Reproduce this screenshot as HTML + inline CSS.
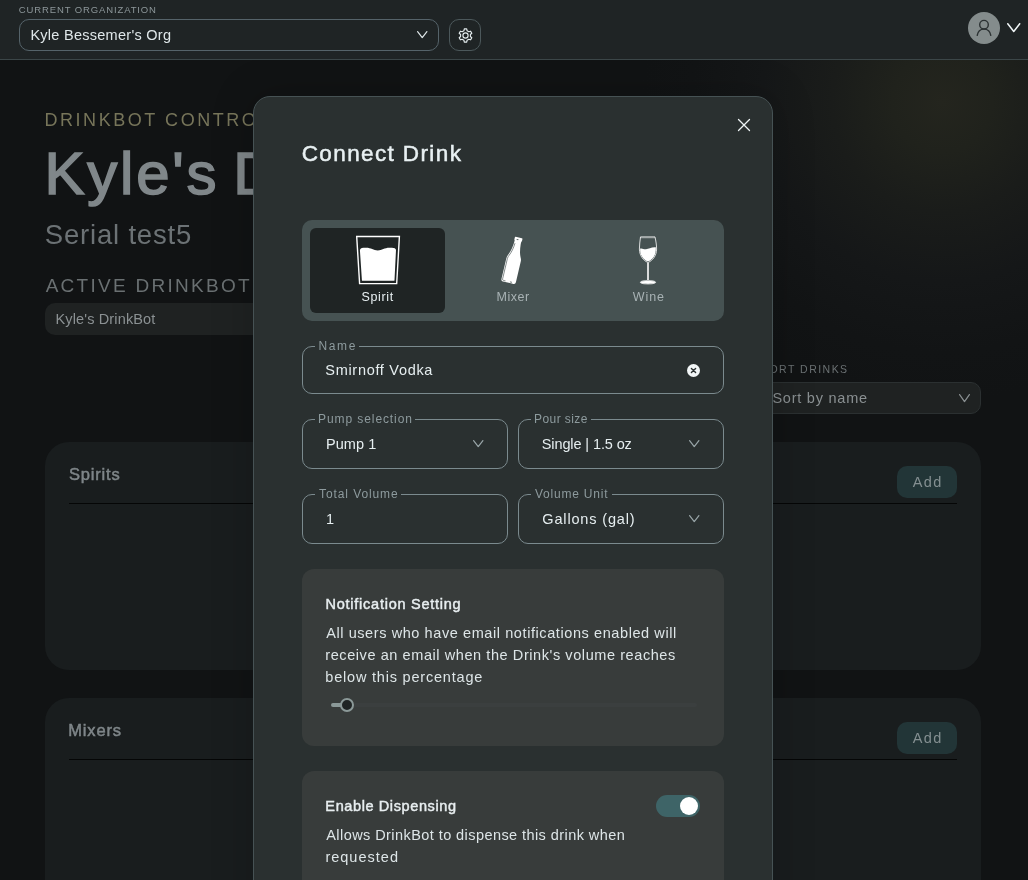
<!DOCTYPE html>
<html><head><meta charset="utf-8"><title>DrinkBot Control</title>
<style>
*{box-sizing:border-box;margin:0;padding:0}
html,body{width:1028px;height:880px;overflow:hidden;background:#111314;font-family:"Liberation Sans",sans-serif}
body{position:relative}
.a{position:absolute;display:block}
.t{position:absolute;white-space:nowrap;line-height:1}
#back,#hdr,#layer{will-change:transform}
#glow{left:0;top:0;width:1028px;height:880px;background:radial-gradient(circle at 942px 102px,#24251e 0,#20221c 50px,#1a1c1a 110px,#151718 180px,#121415 250px,#111314 300px)}
#hdr{left:0;top:0;width:1028px;height:60px;background:#1f2425;border-bottom:1px solid #3b4648;z-index:5}
.card{background:#191d1e;border-radius:24px}
.line{height:1px;background:#050606}
.addb{background:#223537;border-radius:10px;width:60px;height:32px}
#modal{left:253px;top:96px;width:520px;height:900px;background:#2a3030;border:1px solid #465254;border-radius:17px;box-shadow:0 0 40px 4px rgba(0,0,0,.16);z-index:3}
#layer{left:0;top:0;width:1028px;height:880px;z-index:4}
.fs{border:1px solid #7b8a8e;border-radius:10px}
.gap{background:#2a3030;height:3px}
.pan{background:#383c3b;border-radius:12px}
</style></head><body>
<div id="glow" class="a"></div>
<div id="back" class="a" style="left:0;top:0;width:1028px;height:880px">
<div id="t_ctrl" class="t" style="left:44.45px;top:111.00px;font-size:18px;font-weight:400;color:#77755a;letter-spacing:2.551px;">DRINKBOT CONTROL</div>
<div id="t_title" class="t" style="left:44.48px;top:144.00px;font-size:60px;font-weight:400;color:#80878a;letter-spacing:2.773px;-webkit-text-stroke:1.6px #80878a;word-spacing:-5.5px;">Kyle's DrinkBot</div>
<div id="t_serial" class="t" style="left:44.75px;top:221.00px;font-size:27.5px;font-weight:400;color:#6c7275;letter-spacing:0.812px;">Serial test5</div>
<div id="t_active" class="t" style="left:45.65px;top:276.00px;font-size:19px;font-weight:400;color:#6a7072;letter-spacing:2.277px;">ACTIVE DRINKBOT</div>
<div class="a" style="left:45px;top:303px;width:260px;height:32px;background:#1f2222;border-radius:10px"></div>
<div id="t_bot" class="t" style="left:55.48px;top:312.00px;font-size:14.5px;font-weight:400;color:#8b9193;letter-spacing:0.143px;">Kyle's DrinkBot</div>
<div id="t_sort" class="t" style="left:761.00px;top:364.00px;font-size:10.5px;font-weight:400;color:#6b7173;letter-spacing:1.473px;">SORT DRINKS</div>
<div class="a" style="left:761px;top:382px;width:220px;height:32px;background:#1f2222;border:1px solid #2b3031;border-radius:10px"></div>
<div id="t_sortby" class="t" style="left:772.41px;top:391.00px;font-size:14.5px;font-weight:400;color:#8a9092;letter-spacing:0.768px;">Sort by name</div>
<svg class="a" style="left:959px;top:394px" width="11" height="8.5" viewBox="0 0 11 8.5"><polyline points="0.6,0.6 5.5,7.6000000000000005 10.4,0.6" fill="none" stroke="#8a9092" stroke-width="1.2" stroke-linecap="round" stroke-linejoin="round"/></svg>
<div class="a card" style="left:45px;top:442px;width:936px;height:228px"></div>
<div class="a line" style="left:69px;top:503px;width:888px"></div>
<div class="a addb" style="left:897px;top:466px"></div>
<div class="a card" style="left:45px;top:698px;width:936px;height:228px"></div>
<div class="a line" style="left:69px;top:759px;width:888px"></div>
<div class="a addb" style="left:897px;top:722px"></div>
<div id="t_spirits" class="t" style="left:68.96px;top:466.00px;font-size:16.5px;font-weight:400;color:#7f8689;letter-spacing:0.811px;-webkit-text-stroke:0.5px #7f8689;">Spirits</div>
<div id="t_mixers" class="t" style="left:68.29px;top:722.00px;font-size:16.5px;font-weight:400;color:#7f8689;letter-spacing:0.831px;-webkit-text-stroke:0.5px #7f8689;">Mixers</div>
<div id="t_add1" class="t" style="left:912.85px;top:475.00px;font-size:14.5px;font-weight:400;color:#848f91;letter-spacing:1.286px;">Add</div>
<div id="t_add2" class="t" style="left:912.85px;top:731.00px;font-size:14.5px;font-weight:400;color:#848f91;letter-spacing:1.286px;">Add</div>
</div>
<div id="hdr" class="a">
<div id="t_curorg" class="t" style="left:18.79px;top:5.00px;font-size:9.5px;font-weight:400;color:#8d979a;letter-spacing:0.877px;">CURRENT ORGANIZATION</div>
<div id="t_org" class="t" style="left:30.38px;top:28.00px;font-size:14.5px;font-weight:400;color:#dfe7e9;letter-spacing:0.269px;">Kyle Bessemer's Org</div>
<div class="a" style="left:19px;top:19px;width:420px;height:32px;border:1px solid #55636a;border-radius:10px"></div>
<svg class="a" style="left:417px;top:31px" width="10.5" height="7.5" viewBox="0 0 10.5 7.5"><polyline points="0.6,0.6 5.25,6.6000000000000005 9.9,0.6" fill="none" stroke="#dfe7e9" stroke-width="1.2" stroke-linecap="round" stroke-linejoin="round"/></svg>
<div class="a" style="left:449px;top:19px;width:32px;height:32px;border:1px solid #4c585b;border-radius:10px"></div>
<svg class="a" style="left:457.5px;top:27.5px" width="15" height="15" viewBox="-7.5 -7.5 15 15"><g fill="none" stroke="#e4ecee" stroke-width="1.15" stroke-linejoin="round"><path d="M1.59 -4.74 L1.19 -6.59 L-1.19 -6.59 L-1.59 -4.74 L-3.31 -3.75 L-5.12 -4.32 L-6.30 -2.27 L-4.90 -0.99 L-4.90 0.99 L-6.30 2.27 L-5.12 4.32 L-3.31 3.75 L-1.59 4.74 L-1.19 6.59 L1.19 6.59 L1.59 4.74 L3.31 3.75 L5.12 4.32 L6.30 2.27 L4.90 0.99 L4.90 -0.99 L6.30 -2.27 L5.12 -4.32 L3.31 -3.75 Z"/><circle r="2.6"/></g></svg>
<div class="a" style="left:968px;top:12px;width:32px;height:32px;border-radius:50%;background:#848c8c"></div>
<svg class="a" style="left:968px;top:12px" width="32" height="32" viewBox="0 0 32 32"><g fill="none" stroke="#2b3132" stroke-width="1.4" stroke-linecap="round"><circle cx="16" cy="12.7" r="4.3"/><path d="M9.2 23.4 C9.8 19.6 12.5 17.1 16 17.1 C19.5 17.1 22.2 19.6 22.8 23.4"/></g></svg>
<svg class="a" style="left:1007px;top:23px" width="13.5" height="9.5" viewBox="0 0 13.5 9.5"><polyline points="0.75,0.75 6.75,8.45 12.75,0.75" fill="none" stroke="#f0f6f7" stroke-width="1.5" stroke-linecap="round" stroke-linejoin="round"/></svg>
</div>
<div id="modal" class="a"></div>
<div id="layer" class="a">
<svg class="a" style="left:737px;top:118px" width="14" height="14" viewBox="0 0 14 14"><path d="M1.5 1.5 L12.5 12.5 M12.5 1.5 L1.5 12.5" stroke="#eef4f5" stroke-width="1.3" stroke-linecap="round"/></svg>
<div class="a" style="left:302px;top:220px;width:422px;height:101px;background:#465252;border-radius:10px"></div>
<div class="a" style="left:310px;top:228px;width:135px;height:85px;background:#1f2424;border-radius:6px"></div>
<svg class="a" style="left:340px;top:225px" width="360" height="70" viewBox="340 225 360 70">
<path d="M356.7 236.5 L399.4 236.5 L396.7 283.6 L359.6 283.6 Z" fill="none" stroke="#fff" stroke-width="1.4" stroke-linejoin="miter"/>
<path d="M359.9 250 C360.5 247.6 363 247.7 366.2 247.7 C371 247.7 373.5 250.4 377.8 250.4 C382 250.4 384.5 247.7 389.3 247.7 C392.5 247.7 395.6 247.6 396 250 L394.5 280.2 Q394.4 280.8 393.8 280.8 L362.6 280.8 Q362 280.8 361.9 280.2 Z" fill="#fff"/>
<g transform="translate(518.8 237.5) rotate(13.2)">
<path d="M-3.2 0 Q-3.9 0 -3.9 0.8 L-3.9 2.6 Q-3.9 3.3 -3.4 3.5 L-3.4 6 C-3.8 11.5 -4.6 15.5 -6.3 19 Q-7.4 20.8 -7.4 23 L-7.4 44.2 Q-7.4 46.4 -5.4 46.4 L5.4 46.4 Q7.4 46.4 7.4 44.2 L7.4 23 Q7.4 20.8 6.3 19 C4.6 15.5 3.8 11.5 3.4 6 L3.4 3.5 Q3.9 3.3 3.9 2.6 L3.9 0.8 Q3.9 0 3.2 0 Z" fill="#fff"/>
<path d="M-2.4 6.4 C-2.8 11.7 -3.6 15.8 -5.3 19.4 Q-6.3 21.2 -6.3 23.2 L-6.3 44 Q-6.3 45.3 -5.1 45.3 L-3 45.3" fill="none" stroke="#465252" stroke-width="0.6"/>
<path d="M1.5 45.2 L3.6 45.2" fill="none" stroke="#465252" stroke-width="0.7"/>
<ellipse cx="-0.8" cy="2.3" rx="1.1" ry="0.55" fill="#465252" opacity=".8"/>
</g>
<path d="M640.5 236.9 L655 236.9 C655.9 241 656.6 245 656.6 249 C656.6 256 652.4 260.5 648.5 262.3 L648.5 280.4 C651 280.6 655.6 281.1 655.6 282.3 C655.6 283.6 651.5 283.9 648 283.9 C644.5 283.9 640.4 283.6 640.4 282.3 C640.4 281.1 645 280.6 647.5 280.4 L647.5 262.3 C643.6 260.5 639.4 256 639.4 249 C639.4 245 640 241 640.5 236.9 Z" fill="none" stroke="#fff" stroke-width="0.8" stroke-linejoin="round"/>
<path d="M640.6 237.8 L654.9 237.8" stroke="#fff" stroke-width="0.5" opacity=".8"/>
<path d="M640.2 248.6 C642 247.9 643.6 249.4 646 249.2 C649 249 651 247 655.8 247.3 C656.4 255.5 652.3 259.8 648 261.6 C643.7 259.8 639.6 255.5 640.2 248.6 Z" fill="#fff"/>
<ellipse cx="648" cy="282.3" rx="7.6" ry="1.5" fill="#fff"/>
</svg>

<div class="a fs" style="left:302px;top:346px;width:422px;height:48px"></div>
<div class="a gap" style="left:315px;top:345px;width:44px"></div>
<svg class="a" style="left:687px;top:363.5px" width="13" height="13" viewBox="0 0 13 13"><circle cx="6.5" cy="6.5" r="6.5" fill="#f2f6f7"/><path d="M4.4 4.4 L8.6 8.6 M8.6 4.4 L4.4 8.6" stroke="#2a3030" stroke-width="1.4" stroke-linecap="round"/></svg>
<div class="a fs" style="left:302px;top:419px;width:206px;height:50px"></div>
<div class="a gap" style="left:315px;top:418px;width:100px"></div>
<div class="a fs" style="left:518px;top:419px;width:206px;height:50px"></div>
<div class="a gap" style="left:531px;top:418px;width:60px"></div>
<div class="a fs" style="left:302px;top:494px;width:206px;height:50px"></div>
<div class="a gap" style="left:315px;top:493px;width:86px"></div>
<div class="a fs" style="left:518px;top:494px;width:206px;height:50px"></div>
<div class="a gap" style="left:531px;top:493px;width:81px"></div>
<svg class="a" style="left:473px;top:440.3px" width="10.5" height="7.5" viewBox="0 0 10.5 7.5"><polyline points="0.6,0.6 5.25,6.6000000000000005 9.9,0.6" fill="none" stroke="#9aa6a9" stroke-width="1.2" stroke-linecap="round" stroke-linejoin="round"/></svg>
<svg class="a" style="left:689px;top:440.3px" width="10.5" height="7.5" viewBox="0 0 10.5 7.5"><polyline points="0.6,0.6 5.25,6.6000000000000005 9.9,0.6" fill="none" stroke="#9aa6a9" stroke-width="1.2" stroke-linecap="round" stroke-linejoin="round"/></svg>
<svg class="a" style="left:689px;top:515.3px" width="10.5" height="7.5" viewBox="0 0 10.5 7.5"><polyline points="0.6,0.6 5.25,6.6000000000000005 9.9,0.6" fill="none" stroke="#9aa6a9" stroke-width="1.2" stroke-linecap="round" stroke-linejoin="round"/></svg>
<div class="a pan" style="left:302px;top:569px;width:422px;height:177px"></div>
<div class="a" style="left:331px;top:703px;width:366px;height:4px;background:#3b3f3f;border-radius:2px"></div>
<div class="a" style="left:331px;top:703px;width:12px;height:4px;background:#8b9998;border-radius:2px"></div>
<div class="a" style="left:339.5px;top:698px;width:14px;height:14px;border:2px solid #8b9998;border-radius:50%;background:#1f2424"></div>
<div class="a pan" style="left:302px;top:771px;width:422px;height:160px"></div>
<div class="a" style="left:656px;top:795px;width:44px;height:22px;background:#3e6467;border-radius:11px"></div>
<div class="a" style="left:680px;top:797px;width:18px;height:18px;background:#fff;border-radius:50%"></div>
<div id="t_connect" class="t" style="left:301.74px;top:143.00px;font-size:22.5px;font-weight:400;color:#e8f0f2;letter-spacing:1.383px;-webkit-text-stroke:0.5px #e8f0f2;">Connect Drink</div>
<div id="t_spirit" class="t" style="left:361.49px;top:291.00px;font-size:12.5px;font-weight:400;color:#e8f0f2;letter-spacing:0.633px;">Spirit</div>
<div id="t_mixer" class="t" style="left:496.58px;top:291.00px;font-size:12.5px;font-weight:400;color:#a8b2b4;letter-spacing:0.505px;">Mixer</div>
<div id="t_wine" class="t" style="left:632.65px;top:291.00px;font-size:12.5px;font-weight:400;color:#a8b2b4;letter-spacing:0.956px;">Wine</div>
<div id="t_name" class="t" style="left:318.41px;top:340.00px;font-size:12px;font-weight:400;color:#8d9a9d;letter-spacing:1.664px;">Name</div>
<div id="t_smirnoff" class="t" style="left:325.31px;top:363.00px;font-size:14.5px;font-weight:400;color:#e6eef0;letter-spacing:0.696px;">Smirnoff Vodka</div>
<div id="t_pumpsel" class="t" style="left:318.11px;top:413.00px;font-size:12px;font-weight:400;color:#8d9a9d;letter-spacing:0.906px;">Pump selection</div>
<div id="t_pump1" class="t" style="left:325.88px;top:437.00px;font-size:14.5px;font-weight:400;color:#e6eef0;letter-spacing:0.103px;">Pump 1</div>
<div id="t_pour" class="t" style="left:534.11px;top:413.00px;font-size:12px;font-weight:400;color:#8d9a9d;letter-spacing:0.399px;">Pour size</div>
<div id="t_single" class="t" style="left:541.81px;top:437.00px;font-size:14.5px;font-weight:400;color:#e6eef0;letter-spacing:-0.111px;">Single | 1.5 oz</div>
<div id="t_totvol" class="t" style="left:319.03px;top:488.00px;font-size:12px;font-weight:400;color:#8d9a9d;letter-spacing:0.906px;">Total Volume</div>
<div id="t_one" class="t" style="left:326.04px;top:512.00px;font-size:14.5px;font-weight:400;color:#e6eef0;letter-spacing:0.000px;">1</div>
<div id="t_volunit" class="t" style="left:534.94px;top:488.00px;font-size:12px;font-weight:400;color:#8d9a9d;letter-spacing:0.789px;">Volume Unit</div>
<div id="t_gallons" class="t" style="left:542.30px;top:512.00px;font-size:14.5px;font-weight:400;color:#e6eef0;letter-spacing:0.840px;">Gallons (gal)</div>
<div id="t_notif" class="t" style="left:325.56px;top:597.00px;font-size:14.5px;font-weight:400;color:#e8eef0;letter-spacing:0.749px;-webkit-text-stroke:0.45px #e8eef0;">Notification Setting</div>
<div id="t_n1" class="t" style="left:326.15px;top:626.00px;font-size:14.5px;font-weight:400;color:#dde5e7;letter-spacing:0.587px;">All users who have email notifications enabled will</div>
<div id="t_n2" class="t" style="left:325.29px;top:648.00px;font-size:14.5px;font-weight:400;color:#dde5e7;letter-spacing:0.580px;">receive an email when the Drink's volume reaches</div>
<div id="t_n3" class="t" style="left:325.31px;top:670.00px;font-size:14.5px;font-weight:400;color:#dde5e7;letter-spacing:0.798px;">below this percentage</div>
<div id="t_enable" class="t" style="left:325.36px;top:799.00px;font-size:14.5px;font-weight:400;color:#e8eef0;letter-spacing:0.608px;-webkit-text-stroke:0.45px #e8eef0;">Enable Dispensing</div>
<div id="t_e1" class="t" style="left:326.25px;top:828.00px;font-size:14.5px;font-weight:400;color:#dde5e7;letter-spacing:0.429px;">Allows DrinkBot to dispense this drink when</div>
<div id="t_e2" class="t" style="left:325.39px;top:850.00px;font-size:14.5px;font-weight:400;color:#dde5e7;letter-spacing:1.012px;">requested</div>
</div>
</body></html>
